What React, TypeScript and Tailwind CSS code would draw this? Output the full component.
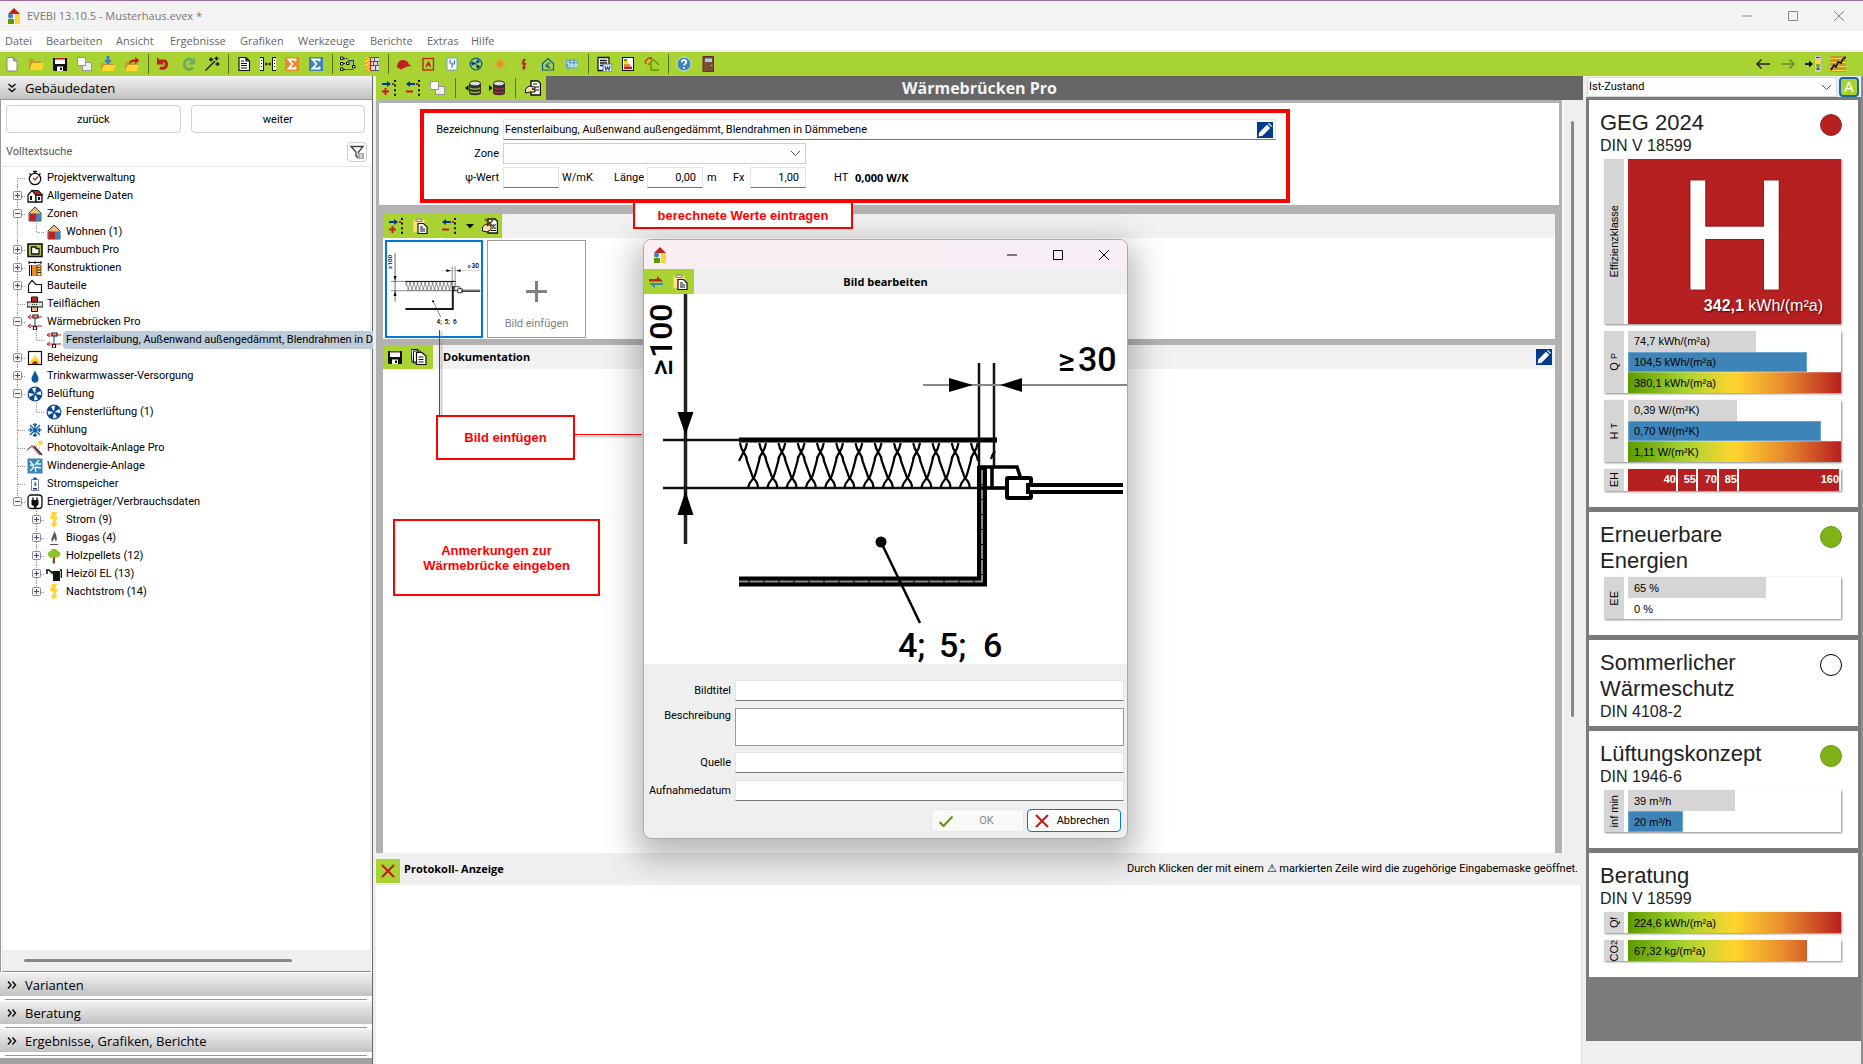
import { useState } from "react";
import type { ReactNode } from "react";

// Symbole, alle auf einem 16er Raster
const icons: Record<string, ReactNode> = {
  logo: (
    <>
      <path d="M2 6 8 0l6 6z" fill="#c02020" />
      <rect x="3" y="6" width="10" height="10" fill="#eee" />
      <circle cx="4.500" cy="8" r="2.500" fill="#3d85b8" />
      <rect x="9" y="6" width="5" height="10" fill="#ffd52e" />
      <rect x="2" y="11" width="6" height="5" fill="#5c9a00" />
    </>
  ),
  file: <path d="M3 1.500h6.500L13 5v10H3zM9.500 1.500V5H13" fill="#fff" stroke="#888" />,
  folder: (
    <>
      <path d="M1 3h5l1 2h6v2H4l-2 7H1z" fill="#c99a2c" />
      <path d="M4 7h12l-2 7H2z" fill="#ffd52e" />
    </>
  ),
  save: (
    <>
      <path d="M1 2h14v13H2l-1-1z" fill="#111" />
      <path d="M3 2h10v1.500H3z" fill="#c02020" />
      <path d="M3 3.500h10V8H3zM5 10.500h6V15H5z" fill="#fff" />
      <path d="M8 11.500h2V14H8z" fill="#111" />
    </>
  ),
  copy: (
    <>
      <rect x="6.500" y="6.500" width="9" height="8" fill="#eee" stroke="#999" />
      <rect x="1.500" y="1.500" width="8" height="8" fill="#fff" stroke="#999" />
    </>
  ),
  folderIn: (
    <>
      <path d="M1 7h4l1 1h8v7H1z" fill="#c99a2c" />
      <path d="M4 9h12l-2 6H1z" fill="#ffd52e" />
      <path d="M6.500 0h3v4H12l-4 5-4-5h2.500z" fill="#3d85b8" />
    </>
  ),
  folderOut: (
    <>
      <path d="M1 6h4l1 1h8v8H1z" fill="#c99a2c" />
      <path d="M4 9h11l-2 6H1z" fill="#ffd52e" />
      <path d="M5 9c0-5 2-5.500 6-5.500V1l4.500 3.500L11 8V6C8 6 7 6 5 9z" fill="#c02020" />
    </>
  ),
  undo: (
    <>
      <path d="M4 5h5a4 4 0 1 1-5 6.500" fill="none" stroke="#c02020" strokeWidth="3" />
      <path d="M1 1v7.500h7.500z" fill="#c02020" />
    </>
  ),
  redo: (
    <>
      <path d="M12.500 4.500A5 5 0 1 0 13 11.500" fill="none" stroke="#6faa5f" strokeWidth="3" />
      <path d="M15 1v7.500H8z" fill="#6faa5f" />
    </>
  ),
  wand: <path d="M1.500 14.500 11 5M7 1.500v4M5 3.500h4M12.500.500v4M10.500 2.500h4M13.500 6v4M11.500 8h4" fill="none" stroke="#111" strokeWidth="1.300" />,
  doc: <path d="M3 1.500h7L13.500 5v9.500H3zM10 1.500V5h3M5 5h3M5 7.500h6M5 9.500h6M5 12h6" fill="#fff" stroke="#111" strokeWidth="1.200" />,
  compare: <path d="M0 1.500h3.500v13H0M1 4.500h1M1 7.500h1M1 10.500h1M16 1.500h-3.500v13H16M15 4.500h-1M15 7.500h-1M15 10.500h-1M5 8h6M6 6.500v3M10 6.500v3" fill="#fff" stroke="#111" />,
  sumOrange: (
    <>
      <rect x="1" y="1" width="14" height="14" fill="#e88b2d" />
      <path d="M11.500 5.500V3.500h-7L8.500 8l-4 4.500h7v-2" fill="none" stroke="#fff" strokeWidth="1.800" />
    </>
  ),
  sumBlue: (
    <>
      <rect x="1" y="1" width="14" height="14" fill="#3d85b8" />
      <path d="M11.500 5.500V3.500h-7L8.500 8l-4 4.500h7v-2" fill="none" stroke="#fff" strokeWidth="1.800" />
    </>
  ),
  nodes: (
    <>
      <path d="M3 2.500h4l3 3M3 7.500h4M3 13.500h3" fill="none" stroke="#111" strokeDasharray="2 1" />
      <path d="M9 4.500h4.500v5" fill="none" stroke="#003a8c" />
      <path d="M5 13.500h8" stroke="#c02020" />
      <path d="M.500 1h2.500v2.500H.500zM.500 6.500h2.500V9H.500zM.500 12h2.500v2.500H.500zM6.500 6h2.500v2.500H6.500zM12.500 9.500H15V12h-2.500z" fill="#fff" stroke="#111" />
    </>
  ),
  wall: (
    <>
      <rect x="1" y="1" width="5" height="14" fill="#ffd52e" />
      <path d="M1 4l5-3M1 8l5-3M1 12l5-3M1 15l5-3" stroke="#d07a3a" />
      <path d="M6.500 1v14" stroke="#c02020" />
      <rect x="7" y="1" width="8" height="14" fill="#ddd" />
      <path d="M7 1.500h8M7 5.500h8M7 9.500h8M7 14.500h8M10.500 1.500v4M13.500 5.500v4M9.500 5.500v4M11.500 9.500v5" stroke="#555" />
    </>
  ),
  cap: <path d="M1 11.500C1 6 4 3.500 8 4c3 .500 4.500 2.500 5 4.500l3 1.500-5 .500-6 3z" fill="#c02020" />,
  flameBox: (
    <>
      <rect x="3" y="2.500" width="10.500" height="11.500" fill="none" stroke="#c02020" strokeWidth="1.300" />
      <path d="M6 11.500C5 8.500 8 8 8 5c2 2 3.500 4.500 2.500 6.500L8.300 9z" fill="#c02020" />
    </>
  ),
  faucet: (
    <>
      <rect x="3" y="2" width="10" height="12" fill="#fff" stroke="#6aa2c8" />
      <path d="M6 4v3h2v5M10.500 4v4H8M6 4h1" fill="none" stroke="#3d85b8" strokeWidth="1.200" />
    </>
  ),
  fan: (
    <>
      <circle cx="8" cy="8" r="5.800" fill="none" stroke="#0a5aa0" strokeWidth="1.300" />
      <circle cx="5" cy="7.500" r="1.700" fill="#003a8c" />
      <circle cx="10" cy="5.200" r="1.700" fill="#0a5aa0" />
      <circle cx="10" cy="10.700" r="1.700" fill="#003a8c" />
      <path d="M5 7.500h3l2-2.300M8 8l2 2.700" stroke="#003a8c" fill="none" />
    </>
  ),
  sun: (
    <>
      <circle cx="8" cy="8" r="3.300" fill="#e88b2d" />
      <path d="M8 2v1.500M8 12.500V14M2 8h1.500M12.500 8H14M3.500 3.500l1.500 1.500M11 11l1.500 1.500M12.500 3.500 11 5M3.500 12.500 5 11" stroke="#e8a22d" strokeWidth="1.200" />
    </>
  ),
  boltRed: <path d="M7 3h3L8 7h2.500L8.700 11h1.500L7.500 14.500 6 11h1l.500-2.500H5.500z" fill="#c02020" />,
  euro: (
    <>
      <path d="M2.500 7.500 8 2.500l5.500 5v6.500h-11z" fill="none" stroke="#0a5aa0" strokeWidth="1.200" />
      <path d="M10.500 7.500C8 6 6.500 8 6.500 9.500s1.500 3 4 2M5.500 9h3.500M5.500 10.500h3.500" fill="none" stroke="#0a5aa0" />
    </>
  ),
  meter: (
    <>
      <rect x="2" y="3.500" width="12" height="9" fill="#6aa2c8" />
      <path d="M4 5v3l1-.500V11M7 5.500h2M7 8h2v3H7zM11 5.500h2M11 8h2v3h-2z" fill="none" stroke="#dff" />
    </>
  ),
  word: (
    <>
      <path d="M2 1.500h11v13H2zM4 4.500h7M4 7h7M4 9.500h4" fill="#fff" stroke="#111" strokeWidth="1.300" />
      <rect x="7" y="8" width="9" height="8" fill="#e6eef8" stroke="#3d6fb5" />
      <path d="M9 10l1 4 1.500-3 1.500 3 1-4" fill="none" stroke="#2a56a0" strokeWidth="1.200" />
    </>
  ),
  energy: (
    <>
      <rect x="2.500" y="1.500" width="11" height="13" fill="#fff" stroke="#111" />
      <path d="M4 3h3v2.500H4z" fill="#5c9a00" />
      <path d="M4 5.500h4.500V8H4z" fill="#ffd52e" />
      <path d="M4 8h6v2.500H4z" fill="#e88b2d" />
      <path d="M4 10.500h8V13H4z" fill="#c02020" />
    </>
  ),
  roofs: (
    <>
      <path d="M1.500 8v-3l3-3M4.500 2 8 2M7 1v3" fill="none" stroke="#d03a20" strokeWidth="1.500" />
      <path d="M3.500 13V8l3-4" fill="none" stroke="#e8a22d" strokeWidth="1.400" />
      <path d="M4.500 9 9.500 3.500 15 9M7 7.500V14h8" fill="none" stroke="#5c9a00" strokeWidth="1.400" />
    </>
  ),
  help: (
    <>
      <circle cx="8" cy="8" r="7" fill="#3d85b8" stroke="#cfe3f2" />
      <path d="M5.800 6.300C5.800 3 10.500 3.300 10.300 6.200 10.200 7.500 8 8 8 9.500M8 11v1.800" fill="none" stroke="#fff" strokeWidth="1.800" />
    </>
  ),
  door: (
    <>
      <path d="M3 .500h10.500V16H3z" fill="#7d4a35" stroke="#553022" />
      <path d="M5 2.500h7V6H5z" fill="#9fd0e8" />
      <path d="M11 9h1.500v1H11z" fill="#ffd52e" />
    </>
  ),
  addRow: (
    <>
      <path d="M1 4h7" stroke="#003a8c" strokeWidth="2" />
      <path d="M6 1l4 3-4 3z" fill="#003a8c" />
      <path d="M1 11.500h7M4.500 8v7" stroke="#c02020" strokeWidth="2" />
      <path d="M14 0v16" stroke="#111" strokeWidth="2" strokeDasharray="2 2.600" />
      <path d="M11 3h2v2h-2z" fill="#c02020" />
    </>
  ),
  removeRow: (
    <>
      <path d="M3 4h7" stroke="#003a8c" strokeWidth="2" />
      <path d="M5 1 1 4l4 3z" fill="#003a8c" />
      <path d="M1 11.500h7" stroke="#c02020" strokeWidth="2" />
      <path d="M14 0v16" stroke="#111" strokeWidth="2" strokeDasharray="2 2.600" />
      <path d="M11 3h2v2h-2z" fill="#c02020" />
    </>
  ),
  dbOut: (
    <>
      <path d="M4 3v10c0 3 12 3 12 0V3z" fill="#333" />
      <ellipse cx="10" cy="3.500" rx="5.500" ry="2.500" fill="#ddd" stroke="#222" />
      <path d="M5 8c2 1.500 8 1.500 10 0M5 11.500c2 1.500 8 1.500 10 0" fill="none" stroke="#9ab83a" strokeWidth="1.300" />
      <path d="M3.500 5v6L0 8z" fill="#111" />
    </>
  ),
  dbIn: (
    <>
      <path d="M4 3v10c0 3 12 3 12 0V3z" fill="#333" />
      <ellipse cx="10" cy="3.500" rx="5.500" ry="2.500" fill="#ddd" stroke="#222" />
      <path d="M5 8c2 1.500 8 1.500 10 0M5 11.500c2 1.500 8 1.500 10 0" fill="none" stroke="#c03030" strokeWidth="1.300" />
      <path d="M0 5v6l3.500-3z" fill="#111" />
    </>
  ),
  handDoc: (
    <>
      <path d="M6 1h7l2.500 2.500V15H6z" fill="#fff" stroke="#111" strokeWidth="1.400" />
      <path d="M8 4h4M10 7h4M10 10h4" stroke="#111" />
      <path d="M.500 9 4 6l6 1v2H7l3 1v2H5L.500 13z" fill="#f6dfa8" stroke="#111" />
    </>
  ),
  handPen: (
    <>
      <path d="M6 1h7l2.500 2.500V15H6z" fill="#fff" stroke="#111" strokeWidth="1.400" />
      <path d="M11 7h3M10 10h4M9 12.500h5" stroke="#111" />
      <path d="M.500 9 4 6l5 1.500v4L5 14 .500 13z" fill="#f6dfa8" stroke="#111" />
      <path d="M3 1l9 8M11 2 5 8" stroke="#5a3a10" strokeWidth="1.500" />
    </>
  ),
  paste: (
    <>
      <rect x="1.500" y="2" width="11" height="12" fill="#ffe27a" stroke="#f0cf4a" />
      <path d="M4 1h6v2.500H4z" fill="#ddd" stroke="#888" />
      <path d="M6 5.500h5.500L15 9v6.500H6zM8 9h3M8 11h5M8 13h5" fill="#fff" stroke="#111" strokeWidth="1.200" />
    </>
  ),
  arrowDown: <path d="M4 6h8l-4 4.500z" fill="#111" />,
  docs: (
    <>
      <path d="M0 .500h7V13H1zM2.500 2h7V14h-7z" fill="#fff" stroke="#111" />
      <path d="M5.500 3.500H11L15 7v8.500H5.500zM7.500 8h5M7.500 10.500h5M7.500 13h5" fill="#fff" stroke="#111" strokeWidth="1.200" />
    </>
  ),
  swap: (
    <>
      <path d="M1 5h8V2l6 5.500H1z" fill="#c02020" />
      <path d="M15 9H1l6 5v-3h8z" fill="#3d85b8" />
    </>
  ),
  arrowLeft: <path d="M15 8H2M6.500 3.500 2 8l4.500 4.500" fill="none" stroke="#222" strokeWidth="1.500" />,
  arrowRight: <path d="M1 8h13M9.500 3.500 14 8l-4.500 4.500" fill="none" stroke="#6d8c22" strokeWidth="1.500" />,
  gauge: (
    <>
      <path d="M0 8h5" stroke="#111" strokeWidth="2" />
      <path d="M4 4.500 8 8l-4 3.500z" fill="#111" />
      <path d="M10 0h6v16h-6z" fill="#ccc" />
      <path d="M11 3h4v4h-4z" fill="#ffd52e" />
      <path d="M11 8h4v3h-4z" fill="#7ab01a" />
      <path d="M11 1.500h4M11 13h4M13 11v3" stroke="#444" />
    </>
  ),
  chart: (
    <>
      <rect width="16" height="16" fill="#b79a44" />
      <path d="M0 2.500h16M0 6.500h16M0 10.500h16M0 14.500h16" stroke="#ffd52e" />
      <path d="M1 14l3-5 2 2 2-5 3 1 2-4 3-2" fill="none" stroke="#111" strokeWidth="1.600" />
    </>
  ),
  pencil: (
    <>
      <rect width="16" height="16" fill="#003a8c" />
      <path d="M1.500 14.500 2.300 10.500 10 2.800l3.200 3.200-7.700 7.700z" fill="#fff" />
      <path d="M11 1.800 12 1l3 3-.800 1z" fill="#fff" />
    </>
  ),
  filter: (
    <>
      <path d="M2 2.500h12L9.500 8v6L7 12V8z" fill="none" stroke="#444" strokeWidth="1.400" />
      <path d="M9 9h6v6H9z" fill="#aaa" />
      <path d="M12 10v4" stroke="#fff" />
    </>
  ),
  redX: <path d="M2 2l12 12M14 2 2 14" stroke="#c02020" strokeWidth="2.200" fill="none" />,
  check: <path d="M1.500 9 5.500 13 14.500 3.500" stroke="#5c9a00" strokeWidth="2" fill="none" />,
  stopwatch: (
    <>
      <circle cx="8" cy="9" r="5.700" fill="#fff" stroke="#111" strokeWidth="1.300" />
      <path d="M6 1.500h4M8 2v2M2.500 3.500 4 5M13.500 3.500 12 5" stroke="#111" strokeWidth="1.300" />
      <path d="M6 8l2 2 3-3.500" fill="none" stroke="#c02020" strokeWidth="1.200" />
    </>
  ),
  house: (
    <>
      <path d="M1 14V7l4-4.500L9 7v7z" fill="#fff" stroke="#111" strokeWidth="1.300" />
      <path d="M9 7h6v7H9z" fill="#fff" stroke="#111" strokeWidth="1.300" />
      <path d="M5 2.500h6.500L15.500 7H9z" fill="#c02020" stroke="#111" />
      <path d="M3 8h2v4H3zM11 9h2v3h-2z" fill="#111" />
    </>
  ),
  zone: (
    <>
      <path d="M2 7 8 1l6 6v8H2z" fill="#e6c07a" stroke="#444" />
      <path d="M2.500 7.500H9V15H2.500z" fill="#c02020" />
      <path d="M9 7.500h4.500V15H9z" fill="#3d85b8" />
    </>
  ),
  room: (
    <>
      <rect x="1" y="2" width="14" height="12.500" fill="#a9d332" stroke="#111" strokeWidth="1.600" />
      <path d="M4.500 5H9v1.500h3v5.500H4.500z" fill="#fff" stroke="#111" strokeWidth="1.300" />
    </>
  ),
  construction: (
    <>
      <path d="M2 2.500h12M2 1v3M8 1v3M14 1v3M2.500 5v11M4.500 5v11" stroke="#111" />
      <path d="M5 5h5v11H5z" fill="#e88b2d" />
      <path d="M10 5h4v11h-4z" fill="#ffd52e" stroke="#333" strokeWidth=".800" />
      <path d="M10 7.500h4M10 10h4M10 12.500h4" stroke="#333" />
    </>
  ),
  part: <path d="M1.500 14.500V7L5 2.500 9 6.500h5.500v8z" fill="#fff" stroke="#111" strokeWidth="1.200" />,
  area: (
    <>
      <path d="M0 6h16v5H0z" fill="#ddd" stroke="#111" strokeWidth="1.200" />
      <path d="M4.500 1h6v5h-6z" fill="#c02020" stroke="#111" />
      <path d="M4.500 11h6v4.500h-6z" fill="#e6c07a" stroke="#111" />
      <path d="M5 8.500h6" stroke="#333" strokeDasharray="1 1" />
    </>
  ),
  bridge: (
    <>
      <path d="M8 4v8.500" stroke="#3d85b8" strokeWidth="1.400" />
      <path d="M6 1h5v3H6zM6.500 12.500h3V16h-3z" fill="#fff" stroke="#111" strokeWidth="1.200" />
      <path d="M1 3h14M1 12h14M4 1 1 3l3 2M4 10l-3 2 3 2" fill="none" stroke="#c02020" />
    </>
  ),
  heating: (
    <>
      <rect x="1.500" y="1.500" width="13" height="13" fill="#fff" stroke="#111" strokeWidth="1.200" />
      <path d="M3 14C3 9 7 9 8 4c1 5 5 5 5 10z" fill="#ffd52e" />
      <path d="M5 14c1-4 5-4 6 0z" fill="#c02020" />
    </>
  ),
  drop: <path d="M8 2c1 4 3.500 5.500 3.500 9 0 5-7 5-7 0C4.500 7.500 7 6 8 2z" fill="#0a5aa0" />,
  vent: (
    <>
      <circle cx="8" cy="8" r="7.500" fill="#0a4a94" />
      <path d="M8 8 5 2.500l4-1zM8 8l5.500-3 1 4zM8 8l3 5.500-4 1zM8 8l-5.500 3-1-4z" fill="#fff" />
      <circle cx="8" cy="8" r="1.500" fill="#0a4a94" />
    </>
  ),
  snow: <path d="M1 8h14M3 3l10 10M13 3 3 13M8 1v14M3 6l2 2-2 2M13 6l-2 2 2 2M6 2l2 2 2-2M6 14l2-2 2 2" fill="none" stroke="#0a5aa0" strokeWidth="1.200" />,
  solar: (
    <>
      <path d="M11 1h4.500v4H12z" fill="#ffd52e" />
      <path d="M9 2.500v2M9 6l1.500-1M12 7l.500 1.500" stroke="#e8c22d" />
      <path d="M0 10l5-4 8 9" fill="none" stroke="#c05050" strokeWidth="1.300" />
      <path d="M7 6l8 9" stroke="#222" strokeWidth="1.300" />
    </>
  ),
  wind: (
    <>
      <rect x=".500" y=".500" width="15" height="15" fill="#3d85b8" />
      <path d="M7 8 3 3M8 7l4-5M9 9l5 1M7 9l-4 4M8 9l1 5M3 7l4 1M10 6l4 0" stroke="#dff" strokeWidth="1.400" />
    </>
  ),
  battery: (
    <>
      <path d="M4.500 3.500h7v11h-7z" fill="#fff" stroke="#888" />
      <path d="M6.500 1.500h3v2h-3zM6 12h4v1.500H6z" fill="#003a8c" />
      <path d="M9 5 6.500 8.500H8L7.500 11l2.500-3H8.500z" fill="#0a4a94" />
    </>
  ),
  plug: (
    <>
      <rect x="1" y="1" width="14" height="13.500" rx="3" fill="#fff" stroke="#111" strokeWidth="1.300" />
      <path d="M6 3.500v3M10 3.500v3" stroke="#111" strokeWidth="1.400" />
      <path d="M4.500 6h7v4c0 1-1.500 2-2 2v2H7v-2c-1 0-2.500-1-2.500-2z" fill="#111" />
    </>
  ),
  bolt: <path d="M6 0h5L9 5h3L9.500 11H12l-4.500 5L5 11h2l.500-4H4z" fill="#ffd52e" />,
  gas: (
    <>
      <path d="M6 12C4 8 8 6 8 1c3 4 3.500 8 2 11L8.500 8z" fill="#555" />
      <path d="M4 14.500h8" stroke="#555" />
    </>
  ),
  tree: (
    <>
      <path d="M7 9h2v6.500H6.500z" fill="#7d4a25" />
      <path d="M2 7C1 4 4 3 5 3c0-3 6-3 6 0 3 0 4.500 3 2.500 5-2 2-4 1.500-5.500 1C6 10.500 3 10 2 7z" fill="#8cc22a" />
    </>
  ),
  oil: (
    <>
      <path d="M7 5h7v10H7z" fill="#0b1a08" />
      <path d="M0 4h3l3 3V5M1 4v4M14 4h1.500v8" fill="none" stroke="#0b1a08" strokeWidth="1.500" />
    </>
  ),
};

function Icon({ name, className = "size-4" }: { name: string; className?: string }) {
  return (
    <svg className={`${className} shrink-0`} viewBox="0 0 16 16" aria-hidden="true">
      {icons[name]}
    </svg>
  );
}

function ToolButton({ name }: { name: string }) {
  return (
    <button type="button" aria-label={name} className="flex h-6 w-6 shrink-0 items-center justify-center">
      <Icon name={name} />
    </button>
  );
}

// "|" steht für einen Trennstrich
function ToolGroup({ items, sep = "w-2" }: { items: string[]; sep?: string }) {
  return (
    <>
      {items.map((item, i) =>
        item === "|" ? (
          <span key={i} className={`flex h-5 justify-center ${sep}`}>
            <span className="w-px bg-[#55701a]" />
          </span>
        ) : (
          <ToolButton key={i} name={item} />
        )
      )}
    </>
  );
}

const menuItems = [
  { label: "Datei", width: "w-[41px]" },
  { label: "Bearbeiten", width: "w-[70px]" },
  { label: "Ansicht", width: "w-[54px]" },
  { label: "Ergebnisse", width: "w-[70px]" },
  { label: "Grafiken", width: "w-[58px]" },
  { label: "Werkzeuge", width: "w-[72px]" },
  { label: "Berichte", width: "w-[57px]" },
  { label: "Extras", width: "w-[44px]" },
  { label: "Hilfe", width: "w-[40px]" },
];

const mainTools = [
  "file", "folder", "save", "copy", "folderIn", "folderOut", "|",
  "undo", "redo", "wand", "|",
  "doc", "compare", "sumOrange", "sumBlue", "|",
  "nodes", "wall", "|",
  "cap", "flameBox", "faucet", "fan", "sun", "boltRed", "euro", "meter", "|",
  "word", "energy", "roofs", "|",
  "help", "door",
];

type TreeItem = { label: string; icon: string; level: 1 | 2; box?: "+" | "-"; selected?: boolean; last?: boolean; below?: boolean };

const treeItems: TreeItem[] = [
  { label: "Projektverwaltung", icon: "stopwatch", level: 1 },
  { label: "Allgemeine Daten", icon: "house", level: 1, box: "+" },
  { label: "Zonen", icon: "zone", level: 1, box: "-" },
  { label: "Wohnen (1)", icon: "zone", level: 2, last: true },
  { label: "Raumbuch Pro", icon: "room", level: 1, box: "+" },
  { label: "Konstruktionen", icon: "construction", level: 1, box: "+" },
  { label: "Bauteile", icon: "part", level: 1, box: "+" },
  { label: "Teilflächen", icon: "area", level: 1 },
  { label: "Wärmebrücken Pro", icon: "bridge", level: 1, box: "-" },
  { label: "Fensterlaibung, Außenwand außengedämmt, Blendrahmen in D", icon: "bridge", level: 2, selected: true, last: true },
  { label: "Beheizung", icon: "heating", level: 1, box: "+" },
  { label: "Trinkwarmwasser-Versorgung", icon: "drop", level: 1, box: "+" },
  { label: "Belüftung", icon: "vent", level: 1, box: "-" },
  { label: "Fensterlüftung (1)", icon: "vent", level: 2, last: true },
  { label: "Kühlung", icon: "snow", level: 1 },
  { label: "Photovoltaik-Anlage Pro", icon: "solar", level: 1 },
  { label: "Windenergie-Anlage", icon: "wind", level: 1 },
  { label: "Stromspeicher", icon: "battery", level: 1 },
  { label: "Energieträger/Verbrauchsdaten", icon: "plug", level: 1, box: "-", last: true },
  { label: "Strom (9)", icon: "bolt", level: 2, box: "+", below: true },
  { label: "Biogas (4)", icon: "gas", level: 2, box: "+", below: true },
  { label: "Holzpellets (12)", icon: "tree", level: 2, box: "+", below: true },
  { label: "Heizöl EL (13)", icon: "oil", level: 2, box: "+", below: true },
  { label: "Nachtstrom (14)", icon: "bolt", level: 2, box: "+", last: true, below: true },
];

function Branch({ box, top = true, bottom = true, stub = true }: { box?: "+" | "-"; top?: boolean; bottom?: boolean; stub?: boolean }) {
  const lines = (
    <svg className="h-[18px] w-[19px]" viewBox="0 0 19 18" aria-hidden="true">
      <g stroke="#999" strokeDasharray="1 1" fill="none">
        {top && <path d="M9.500 0v9" />}
        {bottom && <path d="M9.500 9v9" />}
        {stub && <path d="M10 9.500h8" />}
      </g>
      {box && (
        <>
          <rect x="5.500" y="4.500" width="8" height="8" rx="1" fill="#f4f4f4" stroke="#8c8c8c" />
          <path d={box === "+" ? "M7 8.500h5M9.500 6v5" : "M7 8.500h5"} stroke="#2b4fa8" />
        </>
      )}
    </svg>
  );
  if (!box) return <span className="w-[19px] shrink-0">{lines}</span>;
  return (
    <button type="button" aria-label={box === "+" ? "aufklappen" : "zuklappen"} className="w-[19px] shrink-0">
      {lines}
    </button>
  );
}

function TreeRow({ item, first }: { item: TreeItem; first: boolean }) {
  return (
    <li className="flex h-[18px] items-center whitespace-nowrap">
      {item.level === 2 && (item.below ? <span className="w-[19px] shrink-0" /> : <Branch stub={false} />)}
      <Branch box={item.box} top={!first} bottom={!item.last} />
      <Icon name={item.icon} />
      {item.selected ? (
        <span className="ml-px h-[18px] flex-1 rounded-l bg-[#becbd9] pl-[3px] leading-[18px]">{item.label}</span>
      ) : (
        <span className="ml-1 leading-[18px]">{item.label}</span>
      )}
    </li>
  );
}

function Chevrons({ down }: { down?: boolean }) {
  return (
    <svg className={down ? "size-[10px] rotate-90" : "size-[10px]"} viewBox="0 0 10 10" aria-hidden="true">
      <path d="M1 1.500 4 5 1 8.500M5.500 1.500l3 3.500-3 3.500" fill="none" stroke="#111" strokeWidth="1.500" />
    </svg>
  );
}

function SidebarHeader({ label, down }: { label: string; down?: boolean }) {
  return (
    <button type="button" className="flex h-[23px] w-full items-center gap-2 bg-linear-to-b from-[#f2f2f2] to-[#c2c2c2] pl-[7px] text-left font-['Open_Sans'] text-[13px]">
      <Chevrons down={down} />
      {label}
    </button>
  );
}

function Sidebar() {
  return (
    <aside className="flex w-[373px] shrink-0 flex-col border-r border-[#666] bg-white">
      <SidebarHeader label="Gebäudedaten" down />
      <div className="flex flex-1 flex-col border-t border-l border-[#999]">
        <div className="grid grid-cols-2 gap-[10px] px-[5px] pt-[5px] pr-[7px]">
          <button type="button" className="h-7 rounded border border-[#d0d0d0] bg-[#fdfdfd] pt-px">zurück</button>
          <button type="button" className="h-7 rounded border border-[#d0d0d0] bg-[#fdfdfd] pt-px">weiter</button>
        </div>
        <div className="mt-[7px] flex h-6 items-center px-[5px] text-[#555]">
          <input aria-label="Volltextsuche" placeholder="Volltextsuche" className="min-w-0 flex-1 outline-none placeholder:text-[#555]" />
          <button type="button" aria-label="Filter" className="flex size-5 items-center justify-center rounded border border-[#ccc]">
            <Icon name="filter" />
          </button>
        </div>
        <div className="mx-px mt-[2px] flex flex-1 flex-col border border-[#e6e6e6] border-b-[#888]">
          <ul className="flex-1 pt-[2px] pl-[5px]">
            {treeItems.map((item, i) => (
              <TreeRow key={i} item={item} first={i === 0} />
            ))}
          </ul>
          <div className="flex h-[21px] items-center bg-[#efefef] px-[21px]">
            <div className="h-[3px] w-[268px] rounded bg-[#888]" />
          </div>
        </div>
      </div>
      {["Varianten", "Beratung", "Ergebnisse, Grafiken, Berichte"].map((label) => (
        <div key={label} className="mt-px">
          <SidebarHeader label={label} />
          <div className="mx-[5px] h-1 border-b border-[#999]" />
        </div>
      ))}
      <div className="mt-[2px] h-[6px] bg-[#a0a0a5]" />
    </aside>
  );
}

function PencilButton() {
  return (
    <button type="button" aria-label="Bearbeiten" className="size-4 shrink-0">
      <Icon name="pencil" />
    </button>
  );
}

const fieldClass = "h-[21px] border border-[#e4e4e4] border-b-[#777] bg-white outline-none";

function DetailForm() {
  const [name, setName] = useState("Fensterlaibung, Außenwand außengedämmt, Blendrahmen in Dämmebene");
  const [length, setLength] = useState("0,00");
  const [fx, setFx] = useState("1,00");

  return (
    <div className="mx-[3px] bg-white pt-[6px] pb-[2px] pl-[41px]">
      <form className="mr-[269px] flex flex-col gap-[3px] border-4 border-[#ff0000] pt-[6px] pr-[10px] pb-[11px]">
        <div className="flex items-center gap-1">
          <label htmlFor="name" className="w-[75px] text-right">Bezeichnung</label>
          <div className={`flex flex-1 items-center pr-[2px] ${fieldClass}`}>
            <input id="name" value={name} onChange={(e) => setName(e.target.value)} className="min-w-0 flex-1 pl-px outline-none" />
            <PencilButton />
          </div>
        </div>
        <div className="flex items-center gap-1">
          <label htmlFor="zone" className="w-[75px] text-right">Zone</label>
          <div className="relative w-[303px]">
            <select id="zone" className="block h-[21px] w-full appearance-none border border-[#d0d0d0] bg-[#fdfdfd] outline-none" />
            <svg className="pointer-events-none absolute top-[7px] right-[5px] h-[7px] w-[11px]" viewBox="0 0 11 7" aria-hidden="true">
              <path d="M1 1l4.500 4.500L10 1" fill="none" stroke="#555" />
            </svg>
          </div>
        </div>
        <div className="flex items-center">
          <label htmlFor="psi" className="mr-1 w-[75px] text-right">ψ-Wert</label>
          <input id="psi" className={`w-14 text-right ${fieldClass}`} />
          <span className="w-[55px] pl-[3px]">W/mK</span>
          <label htmlFor="length" className="w-[33px]">Länge</label>
          <input id="length" value={length} onChange={(e) => setLength(e.target.value)} className={`w-14 pr-[6px] text-right ${fieldClass}`} />
          <span className="w-[30px] pl-1">m</span>
          <label htmlFor="fx" className="w-[17px]">Fx</label>
          <input id="fx" value={fx} onChange={(e) => setFx(e.target.value)} className={`w-14 pr-[6px] text-right ${fieldClass}`} />
          <span className="w-[49px] pl-7">HT</span>
          <output className="font-['Open_Sans'] font-bold">0,000 W/K</output>
        </div>
      </form>
    </div>
  );
}

function InsulationPattern() {
  const paths: string[] = ["M103 149q-1 6-4 10l-4 8", "M327 149q1 6 4 10t3 8", "M351 157q-3 4-4 8"];
  for (let k = 0; k < 12; k++) {
    const x = 100 + k * 19.25;
    paths.push(`M${x - 4} 149q1 6 4 10t3 8l4 11q1 5 4 8t3 8`);
    paths.push(`M${x + 22} 149q-1 6-4 10t-3 8l-3 11q-1 5-4 8t-4 8`);
  }
  return <path d={paths.join("")} fill="none" stroke="#000" strokeWidth="2.200" />;
}

function Drawing({ className }: { className: string }) {
  return (
    <svg className={className} viewBox="0 0 483 370" role="img" aria-label="Fensterlaibung">
      <rect width="483" height="370" fill="#fff" />
      <path d="M41.500 0v250" stroke="#222" strokeWidth="3.500" />
      <path d="M33.500 118h16l-8 23zM33.500 221h16l-8-24z" />
      <path d="M19 146h77M19 194h343" stroke="#111" strokeWidth="2.500" />
      <path d="M95 146h258" stroke="#000" strokeWidth="5" />
      <InsulationPattern />
      <path d="M335 69v110M350 69v104" stroke="#111" strokeWidth="2.500" />
      <path d="M279 91h204" stroke="#888" strokeWidth="2" />
      <path d="M305 84v14l24-7zM378 84v14l-22-7z" />
      <path d="M338 172v115.500H95" fill="none" stroke="#000" strokeWidth="10" />
      <path d="M338 176v111.500H95" fill="none" stroke="#888" strokeWidth="2" strokeDasharray="14 1" />
      <path d="M334 173h39l4 12M348 173v21M335 194h28" fill="none" stroke="#000" strokeWidth="3.500" />
      <rect x="363" y="184" width="24" height="20" rx="1" fill="#fff" stroke="#000" strokeWidth="4" />
      <path d="M479 191h-95v7h95" fill="#fff" stroke="#000" strokeWidth="4" />
      <circle cx="237" cy="248" r="5.500" />
      <path d="M237 248l39 81" stroke="#000" strokeWidth="2.500" />
      <g className="font-[Roboto] font-medium" fontSize="34">
        <text x="254" y="363">4;</text>
        <text x="295" y="363">5;</text>
        <text x="339" y="363">6</text>
        <text x="414" y="77" fontSize="32">≥</text>
        <text x="434" y="77">30</text>
        <text x="28" y="82" fontSize="32" transform="rotate(-90 28 82)">≥</text>
        <text x="28" y="64" fontSize="32" transform="rotate(-90 28 64)">100</text>
      </g>
    </svg>
  );
}

function MainArea() {
  return (
    <main className="flex min-w-0 flex-1 flex-col bg-[#efefef] pl-[3px]">
      <div className="flex h-6 items-center bg-[#666]">
        <div className="flex h-6 w-[170px] items-center bg-[#a9d332] pl-px">
          <ToolGroup items={["addRow", "removeRow", "copy", "|", "dbOut", "dbIn", "|", "handDoc"]} sep="w-3" />
        </div>
        <h1 className="flex-1 pr-[170px] text-center font-['Open_Sans'] text-[16px] leading-6 font-bold text-[#f4f4f4]">Wärmebrücken Pro</h1>
      </div>
      <div className="flex flex-1">
        <div className="flex min-w-0 flex-1 flex-col bg-[#b2b2b2] pt-[3px]">
          <DetailForm />
          <section className="mx-[7px] mt-[9px] bg-white">
            <div className="flex h-6 bg-[#f1f1f1]">
              <div className="flex bg-[#a9d332] pl-px">
                <ToolGroup items={["addRow", "paste"]} />
                <span className="w-[5px]" />
                <ToolButton name="removeRow" />
                <button type="button" aria-label="Auswahl" className="flex h-6 w-[17px] items-center justify-center">
                  <Icon name="arrowDown" />
                </button>
                <ToolButton name="handPen" />
              </div>
            </div>
            <div className="flex gap-1 pt-[2px] pb-px pl-[2px]">
              <button type="button" aria-label="Bild 1" className="flex h-[98px] w-[98px] items-center border-2 border-[#0078d7] bg-white">
                <Drawing className="w-full" />
              </button>
              <button type="button" className="flex h-[98px] w-[99px] flex-col items-center border border-[#999] pt-[40px] text-[#808080]">
                <svg className="h-[21px] w-[21px]" viewBox="0 0 21 21" aria-hidden="true">
                  <path d="M10.500 0v21M0 10.500h21" stroke="#808080" strokeWidth="3" />
                </svg>
                <span className="mt-[14px]">Bild einfügen</span>
              </button>
            </div>
          </section>
          <section className="mx-[7px] mt-[6px] flex flex-1 flex-col bg-white">
            <div className="flex h-6 items-center bg-[#f1f1f1] pr-[3px]">
              <div className="flex w-[50px] bg-[#a9d332]">
                <ToolGroup items={["save", "docs"]} />
              </div>
              <h2 className="flex-1 pl-[10px] font-['Open_Sans'] font-bold">Dokumentation</h2>
              <PencilButton />
            </div>
            <textarea aria-label="Dokumentation" className="w-full flex-1 resize-none outline-none" />
          </section>
        </div>
        <div className="w-[21px] border-l-2 border-[#f8f8f8] pt-[21px] pb-[136px] pl-[7px]">
          <div className="h-full w-[3px] rounded bg-[#888]" />
        </div>
      </div>
      <div className="flex h-8 items-center pr-[5px]">
        <button type="button" aria-label="Protokoll schließen" className="mt-1 flex size-6 items-center justify-center bg-[#a9d332]">
          <Icon name="redX" />
        </button>
        <h2 className="flex-1 pl-1 font-['Open_Sans'] font-bold">Protokoll- Anzeige</h2>
        <p>Durch Klicken der mit einem ⚠ markierten Zeile wird die zugehörige Eingabemaske geöffnet.</p>
      </div>
      <div className="mr-px h-[179px] border-r border-[#ddd] bg-white" />
    </main>
  );
}

type Bar = { label: string; percent: number; fill: "gray" | "blue" | "scale" };

function Meter({ label, bars, height }: { label: ReactNode; bars: Bar[]; height: string }) {
  return (
    <div className={`flex bg-white shadow-[1px_1px_2px_#888] ${height}`}>
      <div className="flex w-5 items-center justify-center bg-[#d5d5d5]">
        <span className="rotate-180 whitespace-nowrap [writing-mode:vertical-rl]">{label}</span>
      </div>
      <div className="ml-1 flex flex-1 flex-col">
        {bars.map((bar) => (
          <div key={bar.label} className="relative flex flex-1 items-center">
            {bar.fill === "scale" ? (
              <div
                className="absolute inset-0 bg-[linear-gradient(to_right,#5c9a00,#a9d332_27%,#ffd52e_50%,#e88b2d_73%,#b72020)]"
                style={{ clipPath: `inset(0 ${100 - bar.percent}% 0 0)` }}
              />
            ) : (
              <div
                className={bar.fill === "blue" ? "absolute inset-y-0 left-0 border border-[#6ba3cc] bg-[#3d85b8]" : "absolute inset-y-0 left-0 bg-[#d5d5d5]"}
                style={{ width: `${bar.percent}%` }}
              />
            )}
            <span className="relative pl-[6px] leading-4">{bar.label}</span>
          </div>
        ))}
      </div>
    </div>
  );
}

function Card({ title, norm, light, children }: { title: string; norm?: string; light?: string; children?: ReactNode }) {
  return (
    <section className="bg-white px-[11px] pt-[10px]">
      <div className="flex items-start justify-between pr-[5px]">
        <div className="w-[190px] text-[#222]">
          <h2 className="text-[22px] leading-[26px]">{title}</h2>
          {norm && <p className="text-[16px] leading-5">{norm}</p>}
        </div>
        {light && <span className={`mt-1 size-[22px] rounded-full border ${light}`} />}
      </div>
      {children ? <div className="flex flex-col gap-[7px] pt-[3px] pr-[6px] pb-4 pl-1">{children}</div> : <div className="h-1" />}
    </section>
  );
}

const classes = [
  { label: "40", width: "w-12" },
  { label: "55", width: "w-[18px]" },
  { label: "70", width: "w-[19px]" },
  { label: "85", width: "w-[18px]" },
  { label: "160", width: "w-[100px]" },
];

function ResultPanel() {
  return (
    <aside className="flex w-[280px] shrink-0 flex-col border-r-2 border-[#8d8a92] bg-[#efefef] pl-[3px]">
      <div className="flex h-[21px] items-center gap-[2px] pr-[2px] pl-px">
        <div className="relative flex-1">
          <select aria-label="Zustand" className="block h-5 w-full appearance-none border border-[#d8d8d8] bg-[#fdfdfd] pl-px outline-none">
            <option>Ist-Zustand</option>
          </select>
          <svg className="pointer-events-none absolute top-[7px] right-[5px] h-[7px] w-[11px]" viewBox="0 0 11 7" aria-hidden="true">
            <path d="M1 1l4.500 4.500L10 1" fill="none" stroke="#555" />
          </svg>
        </div>
        <button type="button" className="flex size-5 items-center justify-center rounded border-2 border-[#1668a8] bg-[#a9d332] font-['Liberation_Sans'] text-[14px] leading-4 text-white">
          A
        </button>
      </div>
      <div className="mb-[23px] flex flex-1 flex-col gap-[5px] bg-[#7b7b7b] px-[3px] pt-[3px] font-['Liberation_Sans',sans-serif]">
        <Card title="GEG 2024" norm="DIN V 18599" light="bg-[#b72020] border-[#8c3030]">
          <div className="flex h-[165px] bg-white shadow-[1px_1px_2px_#888]">
            <div className="flex w-5 items-center justify-center bg-[#d5d5d5]">
              <span className="rotate-180 [writing-mode:vertical-rl]">Effizienzklasse</span>
            </div>
            <div className="ml-1 flex flex-1 flex-col items-center bg-[#b72020] pt-[14px] text-white">
              <span className="text-[158px] leading-[123px] [text-shadow:0_0_2px_#400]">H</span>
              <p className="w-full pr-[18px] text-right text-[16px] leading-5 [text-shadow:1px_1px_2px_#400]">
                <b>342,1</b> kWh/(m²a)
              </p>
            </div>
          </div>
          <Meter
            height="h-[62px]"
            label={<>Q <span className="text-[9px]">P</span></>}
            bars={[
              { label: "74,7 kWh/(m²a)", percent: 60, fill: "gray" },
              { label: "104,5 kWh/(m²a)", percent: 84, fill: "blue" },
              { label: "380,1 kWh/(m²a)", percent: 100, fill: "scale" },
            ]}
          />
          <Meter
            height="h-[62px]"
            label={<>H <span className="text-[9px]">T</span></>}
            bars={[
              { label: "0,39 W/(m²K)", percent: 51, fill: "gray" },
              { label: "0,70 W/(m²K)", percent: 90.5, fill: "blue" },
              { label: "1,11 W/(m²K)", percent: 100, fill: "scale" },
            ]}
          />
          <div className="flex h-[22px] bg-white shadow-[1px_1px_2px_#888]">
            <div className="flex w-5 items-center justify-center bg-[#d5d5d5]">
              <span className="rotate-180 [writing-mode:vertical-rl]">EH</span>
            </div>
            <div className="ml-1 flex flex-1 gap-[2px] font-bold text-white">
              {classes.map((c) => (
                <span key={c.label} className={`bg-[#b72020] text-right leading-5 ${c.width}`}>{c.label}</span>
              ))}
            </div>
          </div>
        </Card>
        <Card title="Erneuerbare Energien" light="bg-[#7fb217] border-[#6a9c10]">
          <Meter
            height="h-[42px]"
            label="EE"
            bars={[
              { label: "65 %", percent: 65, fill: "gray" },
              { label: "0 %", percent: 0, fill: "gray" },
            ]}
          />
        </Card>
        <Card title="Sommerlicher Wärmeschutz" norm="DIN 4108-2" light="bg-white border-black" />
        <Card title="Lüftungskonzept" norm="DIN 1946-6" light="bg-[#7fb217] border-[#6a9c10]">
          <Meter
            height="h-[42px]"
            label="inf min"
            bars={[
              { label: "39 m³/h", percent: 50, fill: "gray" },
              { label: "20 m³/h", percent: 26, fill: "blue" },
            ]}
          />
        </Card>
        <Card title="Beratung" norm="DIN V 18599">
          <Meter height="h-[21px]" label={<>Q<span className="text-[9px]">f</span></>} bars={[{ label: "224,6 kWh/(m²a)", percent: 100, fill: "scale" }]} />
          <Meter height="h-[21px]" label={<>CO<span className="text-[9px]">2</span></>} bars={[{ label: "67,32 kg/(m²a)", percent: 84, fill: "scale" }]} />
        </Card>
      </div>
    </aside>
  );
}

function WindowButtons({ color }: { color: string }) {
  const shapes = ["M1 6h10", "M1.500 1.500h9v9h-9z", "M1 1l10 10M11 1 1 11"];
  return (
    <div className="flex">
      {["Minimieren", "Maximieren", "Schließen"].map((label, i) => (
        <button key={label} type="button" aria-label={label} className="flex w-[46px] items-center justify-center">
          <svg className={`size-3 ${color}`} viewBox="0 0 12 12" fill="none" stroke="currentColor" aria-hidden="true">
            <path d={shapes[i]} />
          </svg>
        </button>
      ))}
    </div>
  );
}

function ImageDialog() {
  return (
    <div
      role="dialog"
      aria-label="Bild bearbeiten"
      className="absolute top-[239px] left-[643px] w-[485px] overflow-hidden rounded-lg border border-[#aaa] bg-[#efefef] shadow-[0_12px_32px_8px_rgba(0,0,0,0.28)]"
    >
      <div className="flex h-[29px] justify-between bg-linear-to-r from-[#faeef0] to-[#f8eef8] pl-2">
        <span className="flex items-center">
          <Icon name="logo" />
        </span>
        <WindowButtons color="text-black" />
      </div>
      <div className="flex h-[25px] items-center">
        <div className="flex h-[25px] w-[50px] items-center bg-[#a9d332]">
          <ToolGroup items={["swap", "paste"]} />
        </div>
        <h2 className="flex-1 pr-[50px] text-center font-['Open_Sans'] font-bold">Bild bearbeiten</h2>
      </div>
      <Drawing className="block w-full" />
      <form className="grid grid-cols-[87px_1fr] gap-x-1 gap-y-[6px] pt-4 pr-[3px] pb-[6px]">
        <label htmlFor="title" className="text-right leading-[22px]">Bildtitel</label>
        <input id="title" className={fieldClass} />
        <label htmlFor="text" className="text-right leading-4">Beschreibung</label>
        <textarea id="text" className="h-[38px] resize-none border border-[#999] bg-white outline-none" />
        <label htmlFor="source" className="text-right leading-[22px]">Quelle</label>
        <input id="source" className={fieldClass} />
        <label htmlFor="date" className="text-right leading-[22px]">Aufnahmedatum</label>
        <input id="date" className={fieldClass} />
        <div className="col-span-2 mt-px flex justify-end gap-[3px] pr-[3px]">
          <button type="button" disabled className="flex h-[23px] w-[93px] items-center rounded border border-[#e8e8e8] bg-[#f9f9f9] pl-[6px] text-[#888]">
            <Icon name="check" />
            <span className="flex-1 pr-1 text-center">OK</span>
          </button>
          <button type="button" className="flex h-[23px] w-[94px] items-center rounded border border-[#0078d7] bg-[#fdfdfd] pl-[6px]">
            <Icon name="redX" />
            <span className="flex-1 pr-1 text-center">Abbrechen</span>
          </button>
        </div>
      </form>
    </div>
  );
}

const noteClass = "absolute flex items-center justify-center border-2 border-[#ff0000] bg-white text-center font-['Liberation_Sans'] text-[13px] leading-[15px] font-bold text-[#ff0000]";

export default function App() {
  return (
    <div className="relative flex min-h-screen flex-col overflow-hidden bg-white font-['Roboto','Noto_Sans',sans-serif] text-[11px] leading-4 text-black">
      <header className="font-['Open_Sans'] text-[#777]">
        <div className="flex h-[31px] justify-between border-t border-[#9a6f98] bg-[#f3f3f3] pr-px pl-[6px]">
          <div className="flex items-center gap-[5px]">
            <Icon name="logo" />
            EVEBI 13.10.5 - Musterhaus.evex *
          </div>
          <WindowButtons color="text-[#888]" />
        </div>
        <nav className="flex h-[21px] items-center border-b-2 border-[#efefef] bg-white pl-[5px] text-[#666]">
          {menuItems.map((item) => (
            <button key={item.label} type="button" className={`text-left ${item.width}`}>{item.label}</button>
          ))}
        </nav>
      </header>
      <div className="flex h-6 items-center bg-[#a9d332]">
        <ToolGroup items={mainTools} />
        <div className="ml-auto flex gap-px pr-[13px]">
          <ToolGroup items={["arrowLeft", "arrowRight", "gauge", "chart"]} />
        </div>
      </div>
      <div className="flex flex-1">
        <Sidebar />
        <MainArea />
        <ResultPanel />
      </div>

      <ImageDialog />

      {/* Hinweise */}
      <div className="absolute top-[330px] left-[439px] h-[86px] w-px bg-[#ff0000] shadow-[2px_1px_2px_#999]" />
      <div className="absolute top-[434px] left-[574px] h-px w-[68px] bg-[#ff0000] shadow-[1px_2px_2px_#999]" />
      <div className={`${noteClass} top-[201px] left-[633px] h-7 w-[220px]`}>berechnete Werte eintragen</div>
      <div className={`${noteClass} top-[415px] left-[436px] h-[45px] w-[139px]`}>Bild einfügen</div>
      <div className={`${noteClass} top-[519px] left-[393px] h-[77px] w-[207px] px-6`}>Anmerkungen zur Wärmebrücke eingeben</div>
    </div>
  );
}
